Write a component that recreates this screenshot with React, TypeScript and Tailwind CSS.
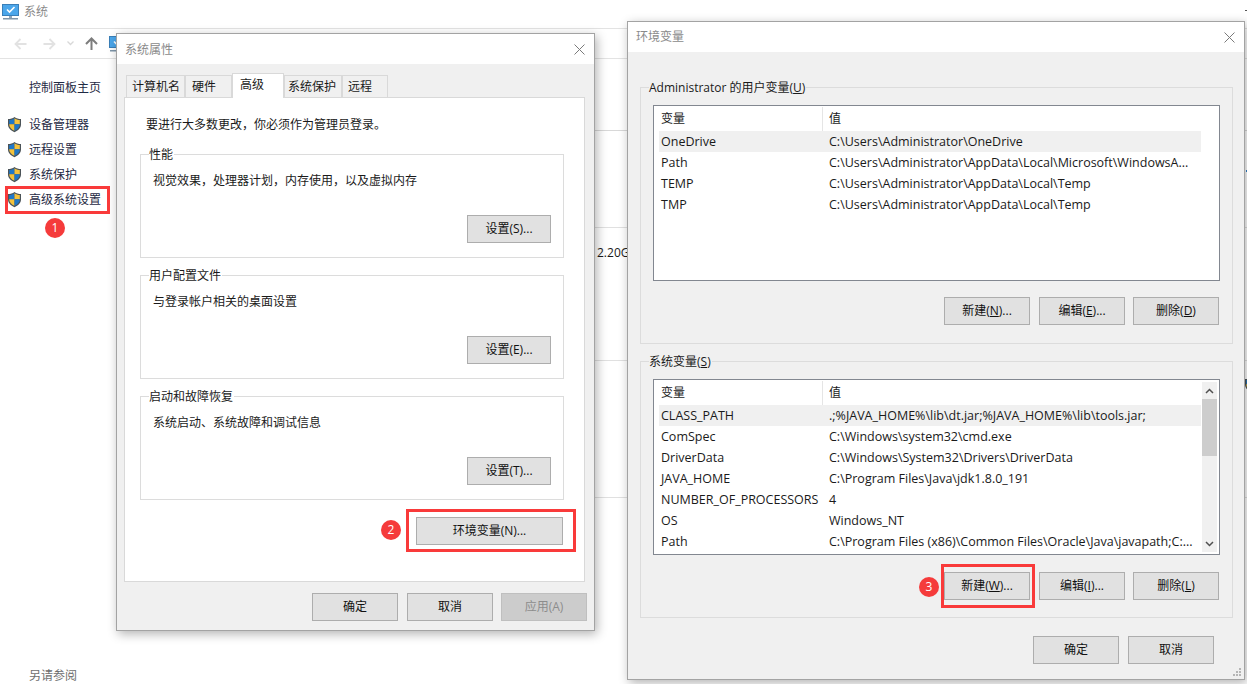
import type { ReactNode } from "react"

const uiFont = "font-['Open_Sans','Noto_Sans_CJK_SC',sans-serif]"

const Shield = () => (
  <svg width="15" height="17" viewBox="0 0 15 17" className="shrink-0">
    <path d="M7.5 1C5.6 2.4 3.5 3 1 3.1V8.5C1 12 3.8 14.6 7.5 16.2 11.2 14.6 14 12 14 8.5V3.1C11.5 3 9.4 2.4 7.5 1Z" fill="#4b5358" />
    <path d="M7.5 2.3C6 3.4 4.2 4 2.2 4.1V8.2H7.5Z" fill="#1f78c8" />
    <path d="M7.5 2.3C9 3.4 10.8 4 12.8 4.1V8.2H7.5Z" fill="#f5c33b" />
    <path d="M2.2 8.2H7.5V14.8C4.6 13.5 2.2 11.4 2.2 8.2Z" fill="#f5c33b" />
    <path d="M12.8 8.2H7.5V14.8C10.4 13.5 12.8 11.4 12.8 8.2Z" fill="#1f78c8" />
  </svg>
)

const MonitorIcon = () => (
  <svg width="17" height="16" viewBox="0 0 17 16" className="shrink-0">
    <rect x="0.5" y="0.5" width="16" height="11" fill="#4ba6ea" stroke="#3a7fb8" />
    <path d="M5 5.5L7.5 8 12.5 3" fill="none" stroke="#ffffff" strokeWidth="1.6" />
    <rect x="7" y="12" width="3" height="2" fill="#8fa5b8" />
    <rect x="1" y="14" width="15" height="1.5" fill="#7f96aa" />
  </svg>
)

const CloseIcon = () => (
  <svg width="11" height="11" viewBox="0 0 11 11">
    <path d="M0.5 0.5L10.5 10.5M10.5 0.5L0.5 10.5" stroke="#7a7a7a" strokeWidth="1" fill="none" />
  </svg>
)

const Arrow = ({ flip, color }: { flip?: boolean; color: string }) => (
  <svg width="13" height="12" viewBox="0 0 13 12" className={flip ? "rotate-180" : ""}>
    <path d="M12.5 6H1.5M6.5 1L1.5 6 6.5 11" fill="none" stroke={color} strokeWidth="1.8" />
  </svg>
)

const Button = ({
  children,
  width = "w-[86px]",
  className = "",
  disabled,
}: {
  children: ReactNode
  width?: string
  className?: string
  disabled?: boolean
}) => (
  <div
    className={`flex h-[28px] items-center justify-center border text-[12px] ${width} ${className} ${
      disabled ? "border-[#bfbfbf] bg-[#cccccc] text-[#8c8c8c]" : "border-[#adadad] bg-[#e1e1e1] text-[#111111]"
    }`}
  >
    {children}
  </div>
)

const GroupBox = ({ title, className, children }: { title: ReactNode; className: string; children: ReactNode }) => (
  <fieldset className={`border border-[#dcdcdc] ${className}`}>
    <legend className="ml-[8px] h-[16px] pr-[1px] pt-px text-[12px] leading-[16px] text-[#1a1a1a]">{title}</legend>
    {children}
  </fieldset>
)

const Dialog = ({
  title,
  className,
  titleClass = "",
  children,
}: {
  title: string
  className: string
  titleClass?: string
  children: ReactNode
}) => (
  <div className={`absolute flex flex-col border border-[#a3a3a3] bg-[#f0f0f0] shadow-[2px_3px_10px_rgba(0,0,0,0.3)] ${className}`}>
    <div className="flex h-[30px] shrink-0 items-center justify-between bg-white pl-[8px] pr-[9px]">
      <span className={`text-[12px] text-[#8a8a8a] ${titleClass}`}>{title}</span>
      <CloseIcon />
    </div>
    {children}
  </div>
)

const tabs = [
  { label: "计算机名", width: "w-[59px] pl-[5px]" },
  { label: "硬件", width: "w-[47px] pl-[6px]" },
  { label: "高级", width: "w-[52px] pl-[7px]", active: true },
  { label: "系统保护", width: "w-[58px] pl-[3px]" },
  { label: "远程", width: "w-[46px] pl-[5px]" },
]

const SettingGroup = ({ title, text, button }: { title: string; text: string; button: string }) => (
  <GroupBox title={title} className="h-[112px]">
    <div className="ml-[12px] mt-[10px] h-[18px] text-[12px] leading-[18px] text-[#1a1a1a]">{text}</div>
    <div className="mt-[25px] flex justify-end pr-[12px]">
      <Button width="w-[84px]">{button}</Button>
    </div>
  </GroupBox>
)

const SystemProperties = () => (
  <Dialog title="系统属性" className="left-[116px] top-[33px] h-[598px] w-[479px]" titleClass="pt-[2px]">
    <div className="pl-[7px] pr-[9px] pt-[9px]">
      <div className="flex h-[24px] items-end pl-[2px]">
        {tabs.map((tab) => (
          <div
            key={tab.label}
            className={`flex items-center border border-b-0 border-[#d9d9d9] text-[12px] text-[#1a1a1a] ${tab.width} ${
              tab.active ? "relative z-10 -mb-px h-[25px] bg-white pb-[3px]" : "h-[22px] bg-[#f0f0f0]"
            }`}
          >
            {tab.label}
          </div>
        ))}
      </div>
      <div className="h-[485px] border border-[#d9d9d9] bg-white pl-[15px] pr-[20px] pt-[18px]">
        <div className="ml-[6px] h-[18px] text-[12px] leading-[18px] text-[#1a1a1a]">
          {"要进行大多数更改\uFF0C你必须作为管理员登录。"}
        </div>
        <div className="mt-[12px] flex flex-col gap-[9px]">
          <SettingGroup title="性能" text={"视觉效果\uFF0C处理器计划\uFF0C内存使用\uFF0C以及虚拟内存"} button="设置(S)..." />
          <SettingGroup title="用户配置文件" text="与登录帐户相关的桌面设置" button="设置(E)..." />
          <SettingGroup title="启动和故障恢复" text="系统启动、系统故障和调试信息" button="设置(T)..." />
        </div>
        <div className="mr-px mt-[17px] flex justify-end">
          <Button width="w-[147px]">环境变量(N)...</Button>
        </div>
      </div>
    </div>
    <div className="mt-[11px] flex justify-end gap-[8px] pr-[7px]">
      <Button className="mr-px">确定</Button>
      <Button>取消</Button>
      <Button disabled>应用(A)</Button>
    </div>
  </Dialog>
)

const Key = ({ text, k, tail }: { text: string; k: string; tail: string }) => (
  <span>
    {text}(<span className="underline">{k}</span>){tail}
  </span>
)

const VarTable = ({ rows, scroll }: { rows: [string, string][]; scroll?: boolean }) => (
  <div className="relative ml-[12px] mt-[10px] h-[176px] w-[567px] overflow-hidden border border-[#828790] bg-white pl-[5px] pt-[1px] text-[#1a1a1a]">
    <div className="flex h-[24px] w-[542px] items-center text-[12px]">
      <div className="h-full w-[164px] border-r border-[#e5e5e5] pl-[2px] leading-[24px]">变量</div>
      <div className="pl-[6px]">值</div>
    </div>
    {rows.map(([name, value], i) => (
      <div key={name} className={`flex h-[21px] w-[542px] items-center whitespace-nowrap pt-[2px] text-[12.5px] ${i === 0 ? "bg-[#f0f0f0]" : ""}`}>
        <div className="w-[164px] pl-[2px]">{name}</div>
        <div className="pl-[6px]">{value}</div>
      </div>
    ))}
    {scroll && (
      <div className="absolute bottom-[2px] right-[2px] top-[2px] flex w-[15px] flex-col items-center bg-[#f0f0f0]">
        <svg width="9" height="17" viewBox="0 0 9 17">
          <path d="M1 11L4.5 7.5 8 11" fill="none" stroke="#505050" strokeWidth="1.5" />
        </svg>
        <div className="h-[57px] w-full bg-[#cdcdcd]" />
        <div className="flex-1" />
        <svg width="9" height="17" viewBox="0 0 9 17">
          <path d="M1 7L4.5 10.5 8 7" fill="none" stroke="#505050" strokeWidth="1.5" />
        </svg>
      </div>
    )}
  </div>
)

const userVars: [string, string][] = [
  ["OneDrive", "C:\\Users\\Administrator\\OneDrive"],
  ["Path", "C:\\Users\\Administrator\\AppData\\Local\\Microsoft\\WindowsA..."],
  ["TEMP", "C:\\Users\\Administrator\\AppData\\Local\\Temp"],
  ["TMP", "C:\\Users\\Administrator\\AppData\\Local\\Temp"],
]

const systemVars: [string, string][] = [
  ["CLASS_PATH", ".;%JAVA_HOME%\\lib\\dt.jar;%JAVA_HOME%\\lib\\tools.jar;"],
  ["ComSpec", "C:\\Windows\\system32\\cmd.exe"],
  ["DriverData", "C:\\Windows\\System32\\Drivers\\DriverData"],
  ["JAVA_HOME", "C:\\Program Files\\Java\\jdk1.8.0_191"],
  ["NUMBER_OF_PROCESSORS", "4"],
  ["OS", "Windows_NT"],
  ["Path", "C:\\Program Files (x86)\\Common Files\\Oracle\\Java\\javapath;C:..."],
]

const EnvironmentVariables = () => (
  <Dialog title="环境变量" className="left-[627px] top-[21px] h-[659px] w-[618px]">
    <div className="flex flex-col gap-[9px] pl-[12px] pr-[11px] pt-[27px]">
      <GroupBox title={<Key text="Administrator 的用户变量" k="U" tail="" />} className="h-[265px]">
        <VarTable rows={userVars} />
        <div className="mr-[13px] mt-[16px] flex justify-end gap-[8px]">
          <Button className="mr-px"><Key text="新建" k="N" tail="..." /></Button>
          <Button><Key text="编辑" k="E" tail="..." /></Button>
          <Button><Key text="删除" k="D" tail="" /></Button>
        </div>
      </GroupBox>
      <GroupBox title={<Key text="系统变量" k="S" tail="" />} className="h-[265px]">
        <VarTable rows={systemVars} scroll />
        <div className="mr-[13px] mt-[17px] flex justify-end gap-[8px]">
          <Button className="mr-px"><Key text="新建" k="W" tail="..." /></Button>
          <Button><Key text="编辑" k="I" tail="..." /></Button>
          <Button><Key text="删除" k="L" tail="" /></Button>
        </div>
      </GroupBox>
    </div>
    <div className="mt-[18px] flex justify-end gap-[9px] pr-[30px]">
      <Button>确定</Button>
      <Button>取消</Button>
    </div>
    <svg width="9" height="9" viewBox="0 0 9 9" className="absolute bottom-[2px] right-[2px]">
      <path d="M6 0h2v2H6zM3 3h2v2H3zM6 3h2v2H6zM0 6h2v2H0zM3 6h2v2H3zM6 6h2v2H6z" fill="#b5b5b5" />
    </svg>
  </Dialog>
)

const sideLinks = ["设备管理器", "远程设置", "系统保护", "高级系统设置"]

const Background = () => (
  <div className="flex h-full flex-col">
    <div className="flex h-[28px] items-start pl-[2px] pt-[4px]">
      <MonitorIcon />
      <span className="ml-[5px] text-[12px] leading-[16px] text-[#8a8a8a]">系统</span>
    </div>
    <div className="flex h-[31px] items-center border-y border-[#e3e3e3] pl-[106px]">
      <div className="ml-[3px]">
        <MonitorIcon />
      </div>
    </div>
    <div className="flex flex-1">
      <div className="flex w-[118px] shrink-0 flex-col pl-[7px]">
        <div className="ml-[22px] mt-[20px] text-[12px] leading-[18px] text-[#1f2a44]">控制面板主页</div>
        <div className="mt-[15px] flex flex-col">
          {sideLinks.map((link) => (
            <div key={link} className="flex h-[25px] items-center gap-[7px] text-[12px] text-[#1f2a44]">
              <Shield />
              {link}
            </div>
          ))}
        </div>
        <div className="-mb-px mt-auto ml-[22px] text-[12px] leading-[18px] text-[#6e6e6e]">另请参阅</div>
      </div>
      <div className="flex flex-1 flex-col">
        <div className="h-[72px] border-b border-[#d8d8d8]" />
        <div className="h-[97px] border-b border-[#e0e0e0]" />
        <div className="h-[133px] border-b border-[#e0e0e0] pl-[479px] pt-[16px] text-[12px] leading-[18px] text-[#1a1a1a]">2.20G</div>
        <div className="h-[137px] border-b border-[#e0e0e0]" />
      </div>
    </div>
  </div>
)

const Marker = ({ n, className }: { n: number; className: string }) => (
  <div className={`absolute flex h-[20px] w-[20px] items-center justify-center rounded-full bg-[#f53b3b] text-[12px] text-white ${className}`}>
    {n}
  </div>
)

export default function App() {
  return (
    <div className={`relative h-[684px] w-[1247px] overflow-hidden bg-white ${uiFont}`}>
      <Background />

      {/* bits of the window behind that peek out at the right edge */}
      <div className="absolute left-[1245px] top-[10px] h-px w-[2px] bg-[#555555]" />
      <div className="absolute left-[1246px] top-[170px] h-[2px] w-px bg-[#2f7fc8]" />
      <div className="absolute left-[1244px] top-[376px]">
        <Shield />
      </div>

      <SystemProperties />
      <EnvironmentVariables />

      {/* step markers drawn over the screenshot */}
      <div className="absolute left-[5px] top-[186px] h-[28px] w-[105px] border-[3px] border-[#f93a3a]" />
      <Marker n={1} className="left-[45px] top-[218px]" />
      <div className="absolute left-[406px] top-[509px] h-[43px] w-[170px] border-[3px] border-[#f93a3a]" />
      <Marker n={2} className="left-[381px] top-[520px]" />
      <div className="absolute left-[941px] top-[564px] h-[44px] w-[94px] border-[3px] border-[#f93a3a]" />
      <Marker n={3} className="left-[919px] top-[577px]" />

      <div className="absolute left-[14px] top-[37px] flex items-center">
        <Arrow color="#e2e2e2" />
        <div className="ml-[16px]"><Arrow flip color="#e2e2e2" /></div>
        <svg width="7" height="5" viewBox="0 0 7 5" className="ml-[11px]">
          <path d="M0.5 0.5L3.5 3.5 6.5 0.5" fill="none" stroke="#d8d8d8" strokeWidth="1.3" />
        </svg>
        <svg width="13" height="13" viewBox="0 0 13 13" className="ml-[11px]">
          <path d="M6.5 13V1.5M1 7L6.5 1.5 12 7" fill="none" stroke="#7d7d7d" strokeWidth="2" />
        </svg>
      </div>
    </div>
  )
}
